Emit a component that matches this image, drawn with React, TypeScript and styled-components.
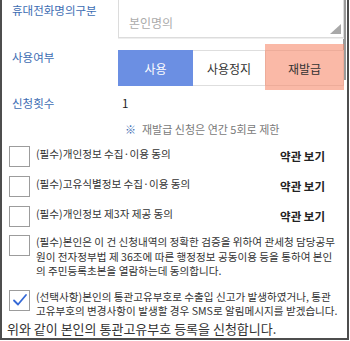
import React from "react";
import styled, { createGlobalStyle } from "styled-components";

const Global = createGlobalStyle`
  html, body { margin: 0; padding: 0; background: #fff; }
  body { font-family: "Noto Sans CJK KR", "Noto Sans", sans-serif; color: #333; }
  * { box-sizing: border-box; }
`;

const Frame = styled.div`
  position: relative;
  width: 349px;
  height: 340px;
  border: 2px solid #4d4d4d;
  border-top: none;
  overflow: hidden;
  padding: 0 0 0 5px;
  display: flex;
  flex-direction: column;
`;

const ScrollThumb = styled.div`
  position: absolute;
  right: 1px;
  top: 0;
  width: 3px;
  height: 80px;
  background: #9a9a9a;
`;

const FieldRow = styled.div<{ $mt?: number }>`
  display: grid;
  grid-template-columns: 111px 1fr;
  margin-top: ${(p) => p.$mt ?? 0}px;
  padding-right: 3px;
`;

const Label = styled.div<{ $pt?: number }>`
  padding: ${(p) => p.$pt ?? 0}px 0 0 5px;
  font-size: 11.5px;
  line-height: 14px;
  color: #3d6db3;
  white-space: nowrap;
`;

const SelectBox = styled.div`
  position: relative;
  margin-top: -4px;
  height: 42px;
  border: 1px solid #dcdcdc;
  box-shadow: 0 1px 0 #eee;
  padding: 19px 0 0 10px;
  font-size: 12px;
  line-height: 14px;
  color: #ababab;
`;

const Grip = styled.div`
  position: absolute;
  right: 2px;
  bottom: 3px;
  width: 0;
  height: 0;
  border-left: 11px solid transparent;
  border-bottom: 10px solid #a8a8a8;
`;

const ButtonGroup = styled.div`
  display: grid;
  grid-template-columns: 75px 73px 1fr;
  height: 36px;
`;

const SegButton = styled.div<{ $active?: boolean }>`
  position: relative;
  display: flex;
  align-items: center;
  justify-content: center;
  font-size: 12px;
  border: 1px solid ${(p) => (p.$active ? "#6b8fe3" : "#dedede")};
  border-left: ${(p) => (p.$active ? "1px solid #6b8fe3" : "none")};
  background: ${(p) => (p.$active ? "#6b8fe3" : "#fff")};
  color: ${(p) => (p.$active ? "#fff" : "#333")};
`;

const Highlight = styled.div`
  position: absolute;
  left: -1px;
  right: -1px;
  top: -7px;
  bottom: -5px;
  background: rgba(246, 138, 108, 0.6);
`;

const ButtonText = styled.span`
  position: relative;
`;

const Value = styled.div`
  padding-left: 4px;
  font-size: 11.5px;
  line-height: 14px;
  color: #222;
`;

const Notice = styled.div`
  margin-top: 12px;
  padding-left: 118px;
  font-size: 11px;
  line-height: 14px;
  color: #7a7a7a;
  white-space: nowrap;
`;

const NoticeMark = styled.span`
  color: #3d6db3;
  margin-right: 6px;
`;

const CheckList = styled.div`
  margin-top: 10px;
  display: flex;
  flex-direction: column;
`;

const CheckRow = styled.div<{ $mt?: number }>`
  display: flex;
  align-items: flex-start;
  gap: 6px;
  margin-top: ${(p) => p.$mt ?? 0}px;
  padding-left: 2px;
`;

const Box = styled.div`
  flex: 0 0 auto;
  width: 21px;
  height: 21px;
  border: 1px solid #9c9c9c;
  background: #fff;
  display: flex;
  align-items: center;
  justify-content: center;
`;

const CheckText = styled.div<{ $pt?: number }>`
  flex: 1;
  padding-top: ${(p) => p.$pt ?? 0}px;
  font-size: 10.6px;
  line-height: 14.5px;
  color: #333;
  word-break: break-all;
  padding-right: 8px;
`;

const TermsLink = styled.div`
  flex: 0 0 auto;
  margin-right: 22px;
  padding-top: 2px;
  font-size: 11.5px;
  line-height: 16px;
  font-weight: 700;
  color: #222;
`;

const Footer = styled.div`
  margin-top: 2px;
  font-size: 13px;
  line-height: 16px;
  color: #333;
  white-space: nowrap;
`;

const Check = () => (
  <svg width="16" height="14" viewBox="0 0 16 14">
    <path d="M2 7.5 L6 11.5 L14 2" fill="none" stroke="#3569d6" strokeWidth="1.8" strokeLinecap="round" strokeLinejoin="round" />
  </svg>
);

const agreements = [
  { text: "(필수)개인정보 수집·이용 동의", mt: 0 },
  { text: "(필수)고유식별정보 수집·이용 동의", mt: 9 },
  { text: "(필수)개인정보 제3자 제공 동의", mt: 9 },
];

export default function App() {
  return (
    <>
      <Global />
      <Frame>
        <ScrollThumb />
        <FieldRow>
          <Label $pt={3}>휴대전화명의구분</Label>
          <SelectBox>
            본인명의
            <Grip />
          </SelectBox>
        </FieldRow>
        <FieldRow $mt={12}>
          <Label $pt={0}>사용여부</Label>
          <ButtonGroup>
            <SegButton $active>사용</SegButton>
            <SegButton>사용정지</SegButton>
            <SegButton>
              <Highlight />
              <ButtonText>재발급</ButtonText>
            </SegButton>
          </ButtonGroup>
        </FieldRow>
        <FieldRow $mt={10}>
          <Label>신청횟수</Label>
          <Value>1</Value>
        </FieldRow>
        <Notice>
          <NoticeMark>※</NoticeMark>재발급 신청은 연간 5회로 제한
        </Notice>
        <CheckList>
          {agreements.map((a) => (
            <CheckRow key={a.text} $mt={a.mt}>
              <Box />
              <CheckText $pt={1}>{a.text}</CheckText>
              <TermsLink>약관 보기</TermsLink>
            </CheckRow>
          ))}
          <CheckRow $mt={8}>
            <Box />
            <CheckText $pt={0}>
              (필수)본인은 이 건 신청내역의 정확한 검증을 위하여 관세청 담당공무원이 전자정부법 제 36조에 따른 행정정보 공동이용 등을 통하여 본인의 주민등록초본을 열람하는데 동의합니다.
            </CheckText>
          </CheckRow>
          <CheckRow $mt={11}>
            <Box>
              <Check />
            </Box>
            <CheckText $pt={0}>
              (선택사항)본인의 통관고유부호로 수출입 신고가 발생하였거나, 통관고유부호의 변경사항이 발생할 경우 SMS로 알림메시지를 받겠습니다.
            </CheckText>
          </CheckRow>
        </CheckList>
        <Footer>위와 같이 본인의 통관고유부호 등록을 신청합니다.</Footer>
      </Frame>
    </>
  );
}
